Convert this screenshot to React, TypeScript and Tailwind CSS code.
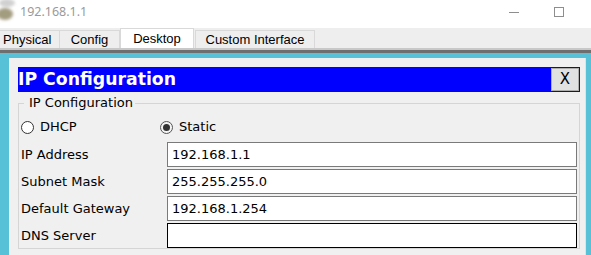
import React from "react";

const fields = [
  { label: "IP Address", value: "192.168.1.1" },
  { label: "Subnet Mask", value: "255.255.255.0" },
  { label: "Default Gateway", value: "192.168.1.254" },
  { label: "DNS Server", value: "", focused: true },
];

const Radio = ({ checked }: { checked?: boolean }) => (
  <span
    className={
      "w-[13px] h-[13px] rounded-full border flex items-center justify-center shrink-0 " +
      (checked ? "border-[#555555] bg-[#f4f4f4]" : "border-[#333333] bg-white")
    }
  >
    {checked && <span className="w-[7px] h-[7px] rounded-full bg-[#333333]" />}
  </span>
);

const WindowTitle = () => (
  <div className="h-[28px] pb-[4px] flex items-center shrink-0">
    <svg width="18" height="24" viewBox="0 0 18 24" className="shrink-0">
      <defs>
        <filter id="blur" x="-50%" y="-50%" width="200%" height="200%">
          <feGaussianBlur stdDeviation="1.6" />
        </filter>
      </defs>
      <g filter="url(#blur)">
        <ellipse cx="7" cy="3" rx="8" ry="4" fill="#d0d0d0" />
        <ellipse cx="5" cy="14" rx="8" ry="6" fill="#a39d80" />
      </g>
    </svg>
    <span className="ml-[2px] text-[12.5px] leading-none text-[#9a9a9a] font-['Noto_Sans',sans-serif]">
      192.168.1.1
    </span>
    <div className="ml-auto flex items-center">
      <div className="w-[10px] h-px bg-[#8e8e8e]" />
      <div className="ml-[35px] mr-[27px] w-[10px] h-[10px] border border-[#8e8e8e]" />
    </div>
  </div>
);

const Tabs = () => (
  <div className="h-[20px] bg-[#eeeeee] flex items-end shrink-0 font-['Liberation_Sans',sans-serif] text-[13px] leading-none text-black">
    <div className="h-[18px] w-[60px] border-t border-r border-[#d9d9d9] pl-[3px] flex items-center">Physical</div>
    <div className="h-[18px] w-[60px] border-t border-r border-[#d9d9d9] flex items-center justify-center">Config</div>
    <div className="h-[20px] w-[74px] bg-white border-x border-t border-[#d9d9d9] flex items-center justify-center">Desktop</div>
    <div className="h-[18px] w-[120px] ml-[1px] border border-b-0 border-[#d9d9d9] flex items-center justify-center">
      Custom Interface
    </div>
  </div>
);

export default function App() {
  return (
    <div className="w-[591px] h-[255px] overflow-hidden bg-white flex flex-col">
      <WindowTitle />
      <Tabs />
      <div className="h-[2px] bg-[#c8c8c8] shrink-0" />
      <div className="h-[3px] bg-[#6e6e6e] shrink-0" />

      <div className="flex-1 flex bg-[#57c1d7] pt-[5px] min-h-0">
        <div className="w-[9px] shrink-0" />
        <div className="w-[577px] bg-[#f0f0f0] border-r border-[#e2e2e2] pl-[9px] pt-[9px] font-['DejaVu_Sans',sans-serif] text-black">
          {/* dialog header */}
          <div className="h-[25px] w-[562px] bg-[#0000ff] flex items-center justify-between">
            <span className="text-white font-bold text-[17.3px] leading-none">IP Configuration</span>
            <button className="w-[28px] h-[23px] mr-[1px] bg-[#e1e1e1] border border-[#adadad] flex items-center justify-center text-[15px] leading-none text-black">
              X
            </button>
          </div>

          <fieldset className="mt-[3px] w-[562px] border border-[#d5d5d5]">
            <legend className="ml-[5px] pl-[5px] pr-[2px] text-[13px] leading-[16px]">IP Configuration</legend>

            <div className="mt-[6px] h-[20px] pl-[2px] flex items-center text-[13px]">
              <div className="w-[139px] flex items-center gap-[6px]">
                <Radio />
                <span>DHCP</span>
              </div>
              <div className="flex items-center gap-[6px]">
                <Radio checked />
                <span>Static</span>
              </div>
            </div>

            <div className="mt-[5px] pl-[2px] grid grid-cols-[146px_410px] gap-y-[2px] text-[13px]">
              {fields.map((f) => (
                <React.Fragment key={f.label}>
                  <div className="h-[25px] flex items-center">{f.label}</div>
                  <input
                    readOnly
                    value={f.value}
                    className={
                      "h-[25px] w-[410px] bg-white pl-[4px] outline-none text-[13px] font-['DejaVu_Sans',sans-serif] border " +
                      (f.focused ? "border-black" : "border-[#7a7a7a]")
                    }
                  />
                </React.Fragment>
              ))}
            </div>
          </fieldset>
        </div>
      </div>
    </div>
  );
}
